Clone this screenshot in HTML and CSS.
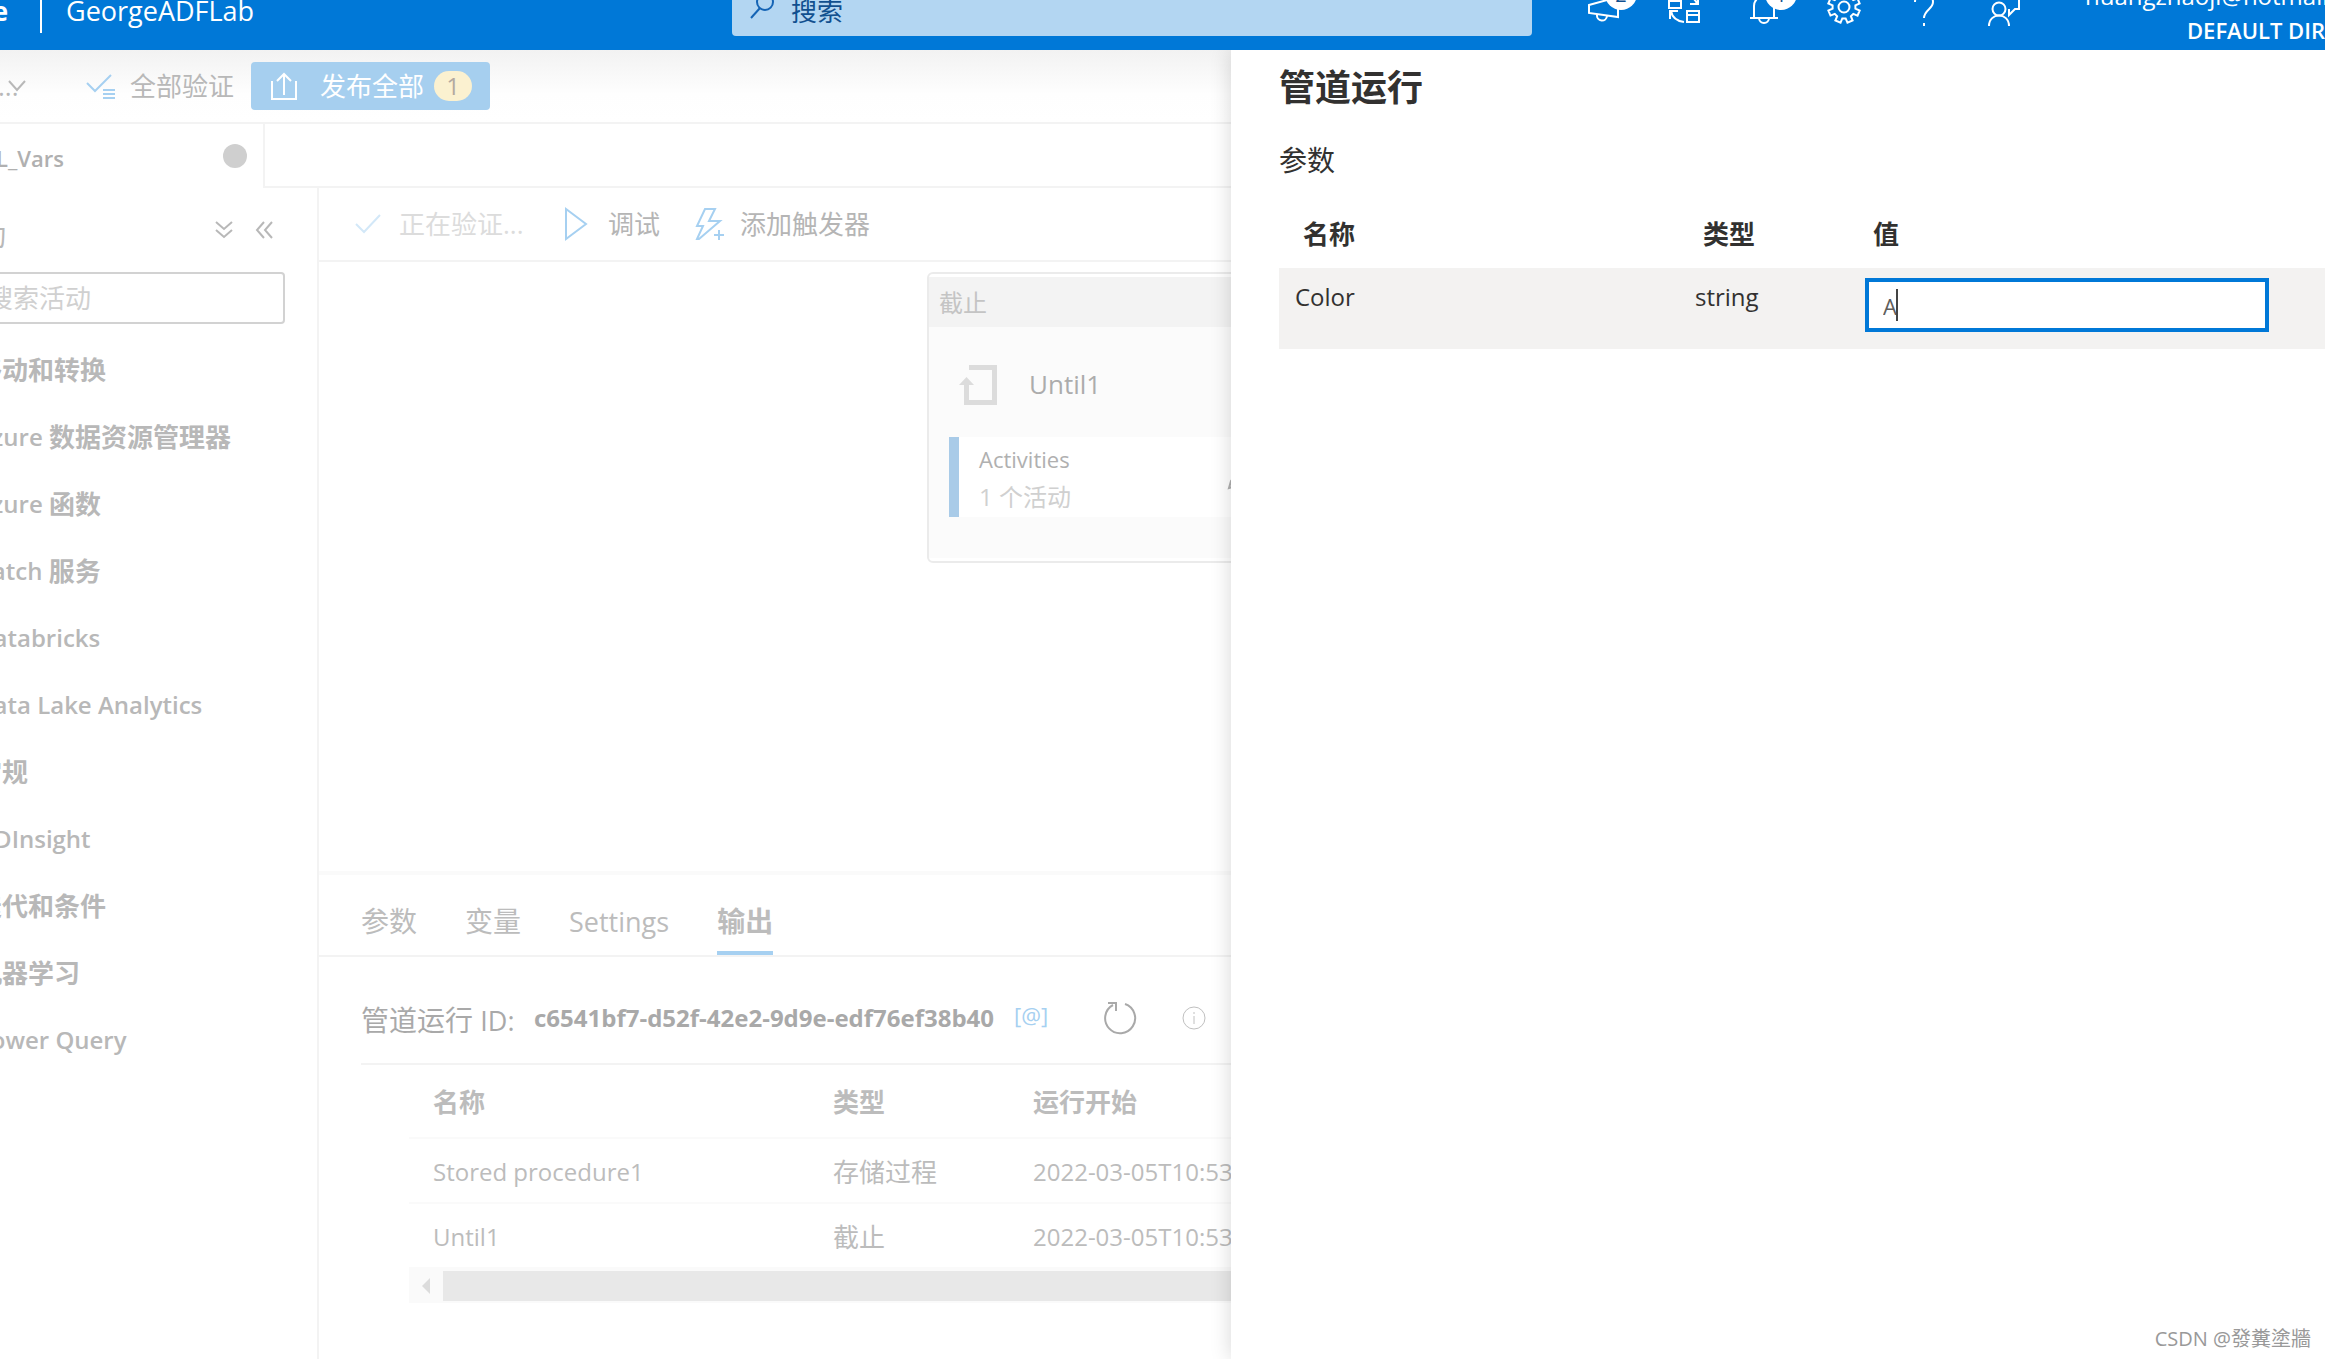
FILE: index.html
```html
<!DOCTYPE html>
<html lang="zh-CN">
<head>
<meta charset="utf-8">
<title>GeorgeADFLab - 管道运行</title>
<link rel="stylesheet" href="styles.css">
</head>
<body>
<div class="app">
  <header class="topbar">
    <div class="topbar-start">
      <div class="clip-start brand"><span>Azure</span></div>
      <span class="divider"></span>
      <span class="factory">GeorgeADFLab</span>
    </div>
    <label class="search">
      <svg width="28" height="28" viewBox="0 0 28 28"><circle cx="16" cy="10" r="8"/><path d="M11 16 2 26"/></svg>
      <input type="search" placeholder="搜索" aria-label="搜索">
    </label>
    <div class="topbar-end">
      <button class="top-icon" aria-label="公告">
        <svg width="36" height="36" viewBox="0 0 36 36"><path d="M3 12 32 4v20L3 20z M11 22a5 5 0 0 0 10 1"/></svg>
        <span class="count">2</span>
      </button>
      <button class="top-icon" aria-label="切换">
        <svg width="36" height="36" viewBox="0 0 36 36"><path d="M3 4h12v11H3z M3 8h12 M21 18h12v11H21z M21 22h12 M18 29C11 28 6 24 5 18 M4 26v-8h8 M20 3c6 1 10 3 11 8 M24 11h8V4"/></svg>
      </button>
      <button class="top-icon" aria-label="通知">
        <svg width="36" height="36" viewBox="0 0 36 36"><path d="M4 25h28 M8 25V13a10 10 0 0 1 20 0v12 M13 25a5 5 0 0 0 10 0"/></svg>
        <span class="count">1</span>
      </button>
      <button class="top-icon" aria-label="设置">
        <svg width="36" height="36" viewBox="-18 -14 36 36"><g transform="rotate(22.5)"><path d="M-2.8-11.2-2.8-15.8 2.8-15.8 2.8-11.2 5.9-9.9 9.2-13.1 13.1-9.2 9.9-5.9 11.2-2.8 15.8-2.8 15.8 2.8 11.2 2.8 9.9 5.9 13.1 9.2 9.2 13.1 5.9 9.9 2.8 11.2 2.8 15.8-2.8 15.8-2.8 11.2-5.9 9.9-9.2 13.1-13.1 9.2-9.9 5.9-11.2 2.8-15.8 2.8-15.8-2.8-11.2-2.8-9.9-5.9-13.1-9.2-9.2-13.1-5.9-9.9z"/></g><circle r="5.5"/></svg>
      </button>
      <button class="top-icon" aria-label="帮助">
        <svg width="36" height="36" viewBox="0 0 36 36"><path d="M9 9c0-12 18-11 18 0 0 7-9 8-9 16 M18 30v3"/></svg>
      </button>
      <button class="top-icon" aria-label="反馈">
        <svg width="36" height="36" viewBox="0 0 36 36"><circle cx="13" cy="16" r="6.5"/><path d="M3 33c0-14 20-14 20 0 M12 3h21v13h-4l-6 6v-6"/></svg>
      </button>
      <div class="account">
        <span>huangzhaoji@hotmail.com</span>
        <strong>DEFAULT DIRECTORY</strong>
      </div>
    </div>
  </header>

  <main class="main">
    <section class="workspace">
      <div class="commands">
        <button class="more" aria-label="更多"><span>...</span><svg width="18" height="12" viewBox="0 0 18 12"><path d="m1 1 8 9 8-9"/></svg></button>
        <button class="cmd">
          <svg class="blue" width="30" height="26" viewBox="0 0 30 26"><path d="m1 10 8 8L25 2"/><path d="M17 17h12M17 21h12M17 25h12"/></svg>
          全部验证
        </button>
        <button class="publish">
          <svg width="26" height="30" viewBox="0 0 26 30"><path d="M1 10v18h24V10 M13 24V3 M6 10l7-7 7 7"/></svg>
          发布全部 <span class="pill">1</span>
        </button>
      </div>

      <div class="filetabs">
        <div class="filetab">
          <div class="clip-start filename"><span>PL_Vars</span></div>
          <span class="dirty"></span>
        </div>
      </div>

      <div class="body">
        <aside class="sidebar">
          <div class="side-head">
            <div class="clip-start side-title"><span>活动</span></div>
            <div class="side-tools">
              <button aria-label="全部展开"><svg width="18" height="18" viewBox="0 0 18 18"><path d="m1 1 8 7 8-7M1 9l8 7 8-7"/></svg></button>
              <button aria-label="折叠"><svg width="18" height="18" viewBox="0 0 18 18"><path d="M9 1 2 9l7 8M17 1l-7 8 7 8"/></svg></button>
            </div>
          </div>
          <input class="side-search" type="text" placeholder="搜索活动" aria-label="搜索活动">
          <ul class="groups">
            <li>移动和转换</li>
            <li><span class="lat">Azure&nbsp;</span>数据资源管理器</li>
            <li><span class="lat">Azure&nbsp;</span>函数</li>
            <li><span class="lat">Batch&nbsp;</span>服务</li>
            <li><span class="lat">Databricks</span></li>
            <li><span class="lat">Data Lake Analytics</span></li>
            <li>常规</li>
            <li><span class="lat">HDInsight</span></li>
            <li>迭代和条件</li>
            <li>机器学习</li>
            <li><span class="lat">Power Query</span></li>
          </ul>
        </aside>

        <div class="editor">
          <div class="tools">
            <button class="tool off" disabled><svg width="26" height="20" viewBox="0 0 26 20"><path d="m1 10 8 8L25 1"/></svg>正在验证...</button>
            <button class="tool debug"><svg width="24" height="34" viewBox="0 0 24 34"><path d="M2 2v30l20-15z"/></svg>调试</button>
            <button class="tool trigger"><svg width="30" height="34" viewBox="0 0 30 34"><path d="M10 2h10l-6 12h11L4 32H2l6-13H2z M24 23v10 M19 28h10"/></svg>添加触发器</button>
          </div>

          <div class="canvas">
            <article class="node">
              <h3>截止</h3>
              <div class="node-body">
                <div class="node-name">
                  <svg width="40" height="42" viewBox="0 0 40 42"><path class="line" d="M10 4.500h25.500v35H7.500V18"/><path class="fill" d="M0 22 7.500 14 15 22z"/></svg>
                  Until1
                </div>
                <div class="inner">
                  <div><p>Activities</p><p class="sub">1 个活动</p></div>
                  <svg width="24" height="24" viewBox="0 0 24 24"><path d="m2 22 2-7L17 2l5 5L9 20z"/></svg>
                </div>
              </div>
            </article>
          </div>

          <nav class="tabs">
            <a href="#">参数</a>
            <a href="#">变量</a>
            <a href="#"><span class="tab-lat">Settings</span></a>
            <a href="#" class="active">输出</a>
          </nav>

          <div class="output">
            <div class="run">
              <span class="run-label">管道运行 <span class="tab-lat">ID:</span></span>
              <strong>c6541bf7-d52f-42e2-9d9e-edf76ef38b40</strong>
              <span class="at">[@]</span>
              <button class="refresh" aria-label="刷新"><svg width="34" height="34" viewBox="0 0 34 34"><path d="M21 3A15 15 0 1 1 9 4 M4 2h8v8"/></svg></button>
              <svg class="info" width="24" height="24" viewBox="0 0 24 24"><circle cx="12" cy="12" r="11"/><path d="M12 10v8 M12 6v2"/></svg>
            </div>
            <div class="runs">
              <table>
                <thead><tr><th>名称</th><th>类型</th><th>运行开始</th></tr></thead>
                <tbody>
                  <tr><td class="en">Stored procedure1</td><td>存储过程</td><td class="en">2022-03-05T10:53:21</td></tr>
                  <tr><td class="en">Until1</td><td>截止</td><td class="en">2022-03-05T10:53:19</td></tr>
                </tbody>
              </table>
              <div class="scroll"><span class="arrow"></span><span class="thumb"></span></div>
            </div>
          </div>
        </div>
      </div>
    </section>

    <section class="panel">
      <h1>管道运行</h1>
      <h2>参数</h2>
      <table class="params">
        <thead><tr><th class="c-name">名称</th><th class="c-type">类型</th><th>值</th></tr></thead>
        <tbody><tr>
          <td><label for="color">Color</label></td><td>string</td>
          <td class="value"><div class="field"><input id="color" type="text" value="A"><span class="caret"></span></div></td>
        </tr></tbody>
      </table>
      <footer>CSDN @發糞塗牆</footer>
    </section>
  </main>
</div>
</body>
</html>
```
FILE: styles.css
```css
* { box-sizing: border-box; }
body {
  margin: 0;
  font: 26px/32px "Open Sans", "Noto Sans CJK SC", sans-serif;
  font-weight: 400;
  color: #323130;
  background: #fff;
  overflow: hidden;
}
button { font: inherit; color: inherit; background: none; border: 0; padding: 0; display: flex; align-items: center; white-space: nowrap; }
input { font: inherit; color: inherit; border: 0; outline: 0; padding: 0; min-width: 0; }
svg { fill: none; stroke: currentColor; stroke-width: 2; flex: none; overflow: visible; }
h1, h2, h3, p, ul { margin: 0; padding: 0; font-weight: 400; }
table { border-collapse: collapse; table-layout: fixed; }
th, td { text-align: left; padding: 0; white-space: nowrap; }
.lat { font-size: 24px; }
.clip-start { display: flex; justify-content: flex-end; white-space: nowrap; }

.app { display: flex; flex-direction: column; height: 100vh; }

/* top bar */
.topbar {
  flex: 0 0 50px;
  display: grid;
  grid-template-columns: 732fr 800fr 793fr;
  grid-template-rows: 78px;
  align-content: end;
  overflow: hidden;
  color: #fff;
  background: #0078d7;
}
.topbar-start, .topbar-end { display: flex; align-items: center; min-width: 0; }
.brand { width: 8px; font-weight: 700; }
.divider { width: 2px; height: 44px; margin: 0 24px 0 32px; background: #fff; }
.factory { font-size: 27px; }
.search {
  align-self: center;
  height: 50px;
  display: flex;
  align-items: center;
  gap: 14px;
  padding-left: 17px;
  border-radius: 4px;
  color: #1564b5;
  background: #b3d6f2;
}
.search input { flex: 1; background: none; }
.search input::placeholder { color: #11508f; opacity: 1; }
.search svg { margin-top: -10px; }
.topbar-end { padding-left: 32px; }
.top-icon { position: relative; flex: 0 0 80px; height: 78px; justify-content: center; }
.count {
  position: absolute;
  left: 41px;
  top: 6px;
  width: 32px;
  height: 32px;
  border-radius: 50%;
  font-size: 20px;
  line-height: 34px;
  color: #11508f;
  background: #fff;
}
.account { display: flex; flex-direction: column; padding: 4px 0 0 41px; font-size: 24px; line-height: 34px; white-space: nowrap; }
.account strong { padding-left: 102px; font-size: 22px; font-weight: 600; }

/* workspace */
.main { flex: 1; display: grid; grid-template-columns: 1231fr 1094fr; min-height: 0; }
.workspace { display: flex; flex-direction: column; min-width: 0; overflow: hidden; color: #b8b8b8; }
.commands {
  flex: 0 0 74px;
  display: flex;
  align-items: center;
  border-bottom: 2px solid #f3f3f3;
  background: linear-gradient(#f2f2f2, #fefefe 44px, #fff);
}
.more { width: 86px; }
.more span { width: 10px; margin-left: -2px; }
.cmd { gap: 14px; width: 165px; }
.blue { color: #a6d0f1; }
.publish { height: 48px; padding: 0 18px 0 20px; gap: 23px; border-radius: 4px; color: #fff; background: #a6cfef; }
.pill { width: 38px; height: 30px; margin-left: -13px; border-radius: 15px; line-height: 30px; font-size: 24px; color: #b3a9a0; background: #fbf1d0; }

.filetabs { flex: 0 0 64px; display: flex; }
.filetabs::after { content: ""; flex: 1; border-bottom: 2px solid #f3f3f3; }
.filetab { flex: 0 0 265px; display: flex; align-items: center; justify-content: space-between; padding-right: 16px; border-right: 2px solid #f3f3f3; }
.filename { width: 64px; padding-top: 4px; font-size: 22px; font-weight: 600; color: #b0b0b0; }
.dirty { width: 24px; height: 24px; border-radius: 50%; background: #cfcfcf; }
.body { flex: 1; display: flex; min-height: 0; }

/* activities sidebar */
.sidebar { flex: 0 0 319px; border-right: 2px solid #f3f3f3; overflow: hidden; }
.side-head { height: 84px; display: flex; align-items: center; justify-content: space-between; padding-right: 44px; }
.side-title { width: 6px; padding-top: 10px; font-size: 28px; }
.side-tools { display: flex; gap: 22px; }
.side-search { display: block; width: 345px; height: 52px; margin: 0 0 12px -60px; padding-left: 45px; border: 2px solid #d2d2d2; border-radius: 4px; }
.side-search::placeholder { color: #d0d0d0; opacity: 1; }
.groups { margin-left: -24px; list-style: none; }
.groups li { height: 67px; display: flex; align-items: center; font-weight: 700; white-space: nowrap; }
.groups .lat { font-weight: 600; }

/* pipeline editor */
.editor { flex: 1; min-width: 0; display: flex; flex-direction: column; }
.tools { flex: 0 0 74px; display: flex; align-items: center; padding-left: 36px; border-bottom: 2px solid #f3f3f3; }
.tool { gap: 20px; color: #b5b5b5; }
.tool svg { color: #a6d0f1; }
.off { width: 209px; gap: 18px; color: #dcdcdc; }
.off svg { color: #d3e8f8; }
.debug { width: 131px; }
.trigger { gap: 15px; }
.canvas { flex: 1; padding: 10px 0 0 608px; overflow: hidden; border-bottom: 4px solid #fafafa; }
.node { width: 640px; height: 291px; padding: 3px 0; border: 2px solid #ebebeb; border-radius: 6px; }
.node h3 { height: 50px; padding-left: 10px; font-size: 24px; line-height: 52px; color: #c4c4c4; background: #f3f3f3; }
.node-body { height: 231px; padding: 34px 20px 40px; background: #fbfbfb; }
.node-name { height: 46px; display: flex; align-items: center; gap: 30px; margin-bottom: 30px; padding-left: 10px; color: #acacac; }
.node-name svg { color: #dcdcdc; stroke-width: 5; }
.node-name .fill { fill: currentColor; stroke: none; }
.inner { height: 80px; display: flex; align-items: center; gap: 156px; padding: 2px 0 0 20px; border-left: 10px solid #a9cbe8; font-size: 22px; line-height: 38px; color: #b0b0b0; background: #fff; }
.inner .sub { font-size: 24px; color: #d0d0d0; }

.tabs { flex: 0 0 80px; display: flex; gap: 48px; padding-left: 42px; border-bottom: 2px solid #f3f3f3; font-size: 28px; }
.tabs a { height: 80px; padding-top: 30px; color: #bcbcbc; text-decoration: none; }
.tabs .active { font-weight: 700; border-bottom: 4px solid #a6d0f1; }
.tab-lat { font-size: 27px; }
.output { flex: 0 0 402px; padding-left: 42px; overflow: hidden; }
.run { height: 108px; display: flex; align-items: center; padding-top: 16px; border-bottom: 2px solid #f3f3f3; color: #a9a9a9; white-space: nowrap; }
.run-label { width: 173px; padding-top: 4px; font-size: 28px; }
.run strong { width: 480px; font-size: 24px; font-weight: 700; }
.at { width: 90px; padding-bottom: 6px; font-size: 22px; color: #a6d0f1; }
.refresh { width: 78px; }
.info { color: #c0c0c0; stroke-width: 1; }
.runs { padding-left: 48px; }
.runs table { width: 1000px; color: #bcbcbc; }
.runs th, .runs td { padding: 2px 0 0 24px; border-bottom: 2px solid #fafafa; }
.runs th { height: 73px; font-weight: 700; }
.runs td { height: 65px; }
.runs th:first-child { width: 400px; }
.runs th:nth-child(2) { width: 200px; }
.runs .en { font-size: 24px; }
.scroll { height: 34px; display: flex; align-items: center; padding-left: 13px; background: #fafafa; }
.arrow { border: 8px solid transparent; border-left: 0; border-right-color: #dcdcdc; }
.thumb { flex: 1; height: 30px; margin-left: 13px; background: #e8e8e8; }

/* run panel */
.panel { position: relative; display: flex; flex-direction: column; padding-left: 48px; min-width: 0; background: #fff; box-shadow: 0 0 20px rgba(0, 0, 0, .16); clip-path: inset(0 0 0 -30px); }
.panel h1 { padding-top: 16px; font-size: 36px; line-height: 44px; font-weight: 700; }
.panel h2 { padding: 34px 0 42px; font-size: 28px; line-height: 32px; }
.params { width: 100%; }
.params th { height: 50px; padding: 0 0 18px 24px; font-weight: 700; }
.params th:last-child { padding-left: 8px; }
.c-name { width: 400px; }
.c-type { width: 186px; }
.params tbody tr { height: 81px; background: #f3f2f1; }
.params td { padding: 13px 0 0 16px; vertical-align: top; font-size: 24px; }
.params td.value { padding: 10px 56px 0 0; }
.field { position: relative; height: 54px; }
.field input { width: 100%; height: 54px; padding: 2px 0 0 14px; border: 4px solid #0078d7; font-size: 22px; color: #605e5c; background: #fff; }
.caret { position: absolute; left: 31px; top: 11px; width: 2px; height: 32px; background: #444; }
.panel footer { margin: auto 14px 4px 0; text-align: right; font-size: 20px; color: #999; }
```
